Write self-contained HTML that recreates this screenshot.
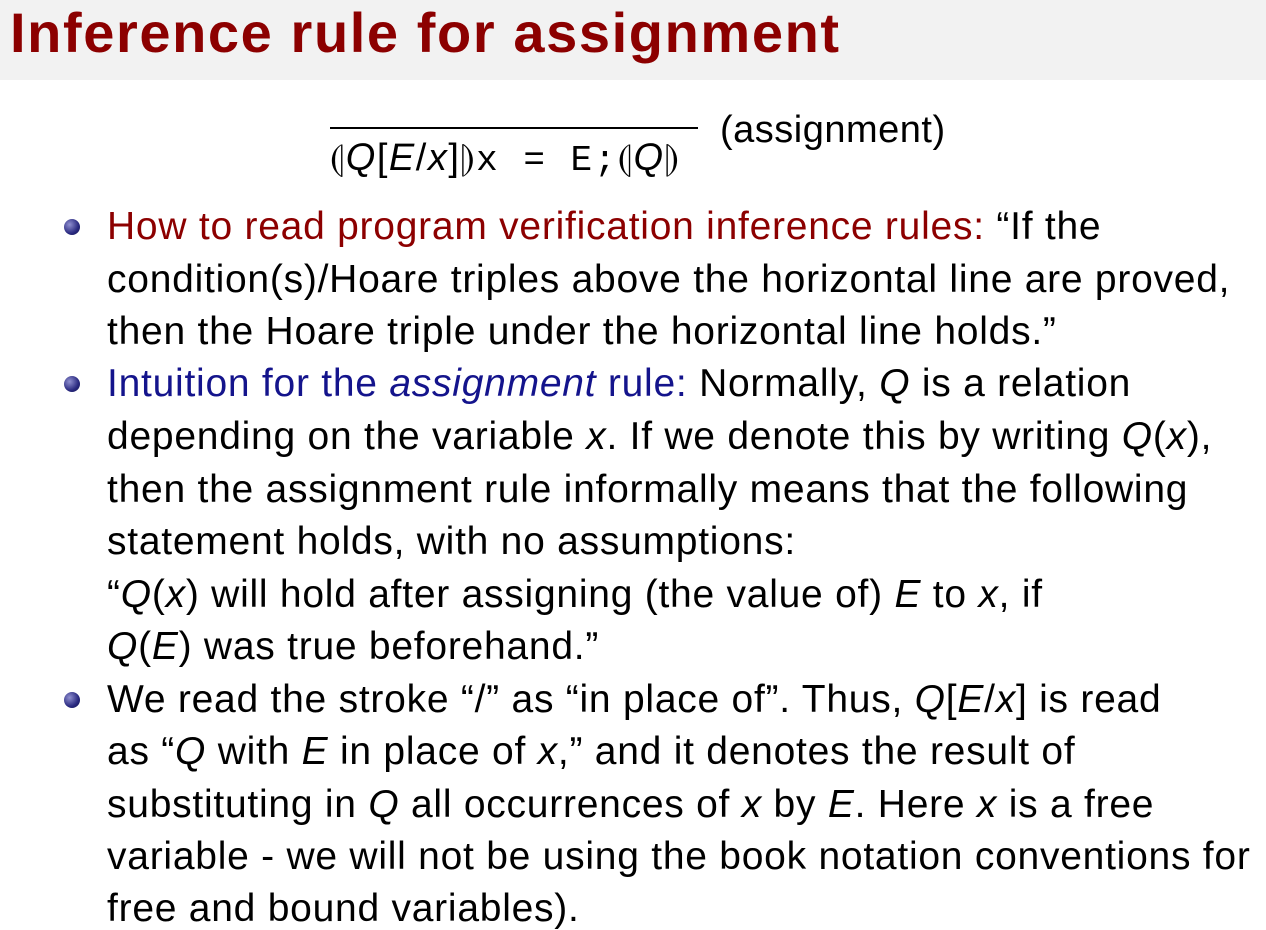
<!DOCTYPE html>
<html><head><meta charset="utf-8"><style>
body{margin:0;width:1266px;height:926px;overflow:hidden;background:#fff;font-family:"Liberation Sans",sans-serif;position:relative}
.bar{position:absolute;left:0;top:0;width:1266px;height:80px;background:#f2f2f2}
.title{position:absolute;left:10px;top:3px;font-size:56px;letter-spacing:1.6px;font-weight:bold;color:#8c0000;white-space:nowrap;line-height:60px}
.l{position:absolute;left:107px;font-size:39px;line-height:40px;white-space:nowrap;color:#000;letter-spacing:0.75px}
.r{color:#8c0000}.b{color:#14148c}
.dot{position:absolute;left:64px;width:16px;height:16px;border-radius:50%;background:radial-gradient(circle at 35% 35%,#9090d0,#2a2a80 60%,#10104a)}
i{font-style:italic}
.m{font-family:"Liberation Mono",monospace;font-size:36px;letter-spacing:2px}
</style></head><body>
<div class="bar"></div>
<div class="title">Inference rule for assignment</div>
<div style="position:absolute;left:330px;top:127px;width:368px;height:1.5px;background:#000"></div>
<div style="position:absolute;left:330px;top:138px;font-size:38px;line-height:40px;white-space:nowrap;letter-spacing:1.5px">⦇<i>Q</i>[<i>E</i>/<i>x</i>]⦈<span class="m">x = E;</span>⦇<i>Q</i>⦈</div>
<div style="position:absolute;left:720px;top:110px;font-size:38px;line-height:40px;letter-spacing:0.5px">(assignment)</div>

<div class="dot" style="top:219px"></div>
<div class="l" style="top:207px"><span class="r">How to read program verification inference rules:</span> “If the</div>
<div class="l" style="top:260px">condition(s)/Hoare triples above the horizontal line are proved,</div>
<div class="l" style="top:312px">then the Hoare triple under the horizontal line holds.”</div>
<div class="dot" style="top:376px"></div>
<div class="l" style="top:364px"><span class="b">Intuition for the <i>assignment</i> rule:</span> Normally, <i>Q</i> is a relation</div>
<div class="l" style="top:417px">depending on the variable <i>x</i>. If we denote this by writing <i>Q</i>(<i>x</i>),</div>
<div class="l" style="top:470px">then the assignment rule informally means that the following</div>
<div class="l" style="top:522px">statement holds, with no assumptions:</div>
<div class="l" style="top:575px">“<i>Q</i>(<i>x</i>) will hold after assigning (the value of) <i>E</i> to <i>x</i>, if</div>
<div class="l" style="top:627px"><i>Q</i>(<i>E</i>) was true beforehand.”</div>
<div class="dot" style="top:692px"></div>
<div class="l" style="top:680px">We read the stroke “/” as “in place of”. Thus, <i>Q</i>[<i>E</i>/<i>x</i>] is read</div>
<div class="l" style="top:732px">as “<i>Q</i> with <i>E</i> in place of <i>x</i>,” and it denotes the result of</div>
<div class="l" style="top:785px">substituting in <i>Q</i> all occurrences of <i>x</i> by <i>E</i>. Here <i>x</i> is a free</div>
<div class="l" style="top:837px">variable - we will not be using the book notation conventions for</div>
<div class="l" style="top:889px">free and bound variables).</div>
</body></html>
